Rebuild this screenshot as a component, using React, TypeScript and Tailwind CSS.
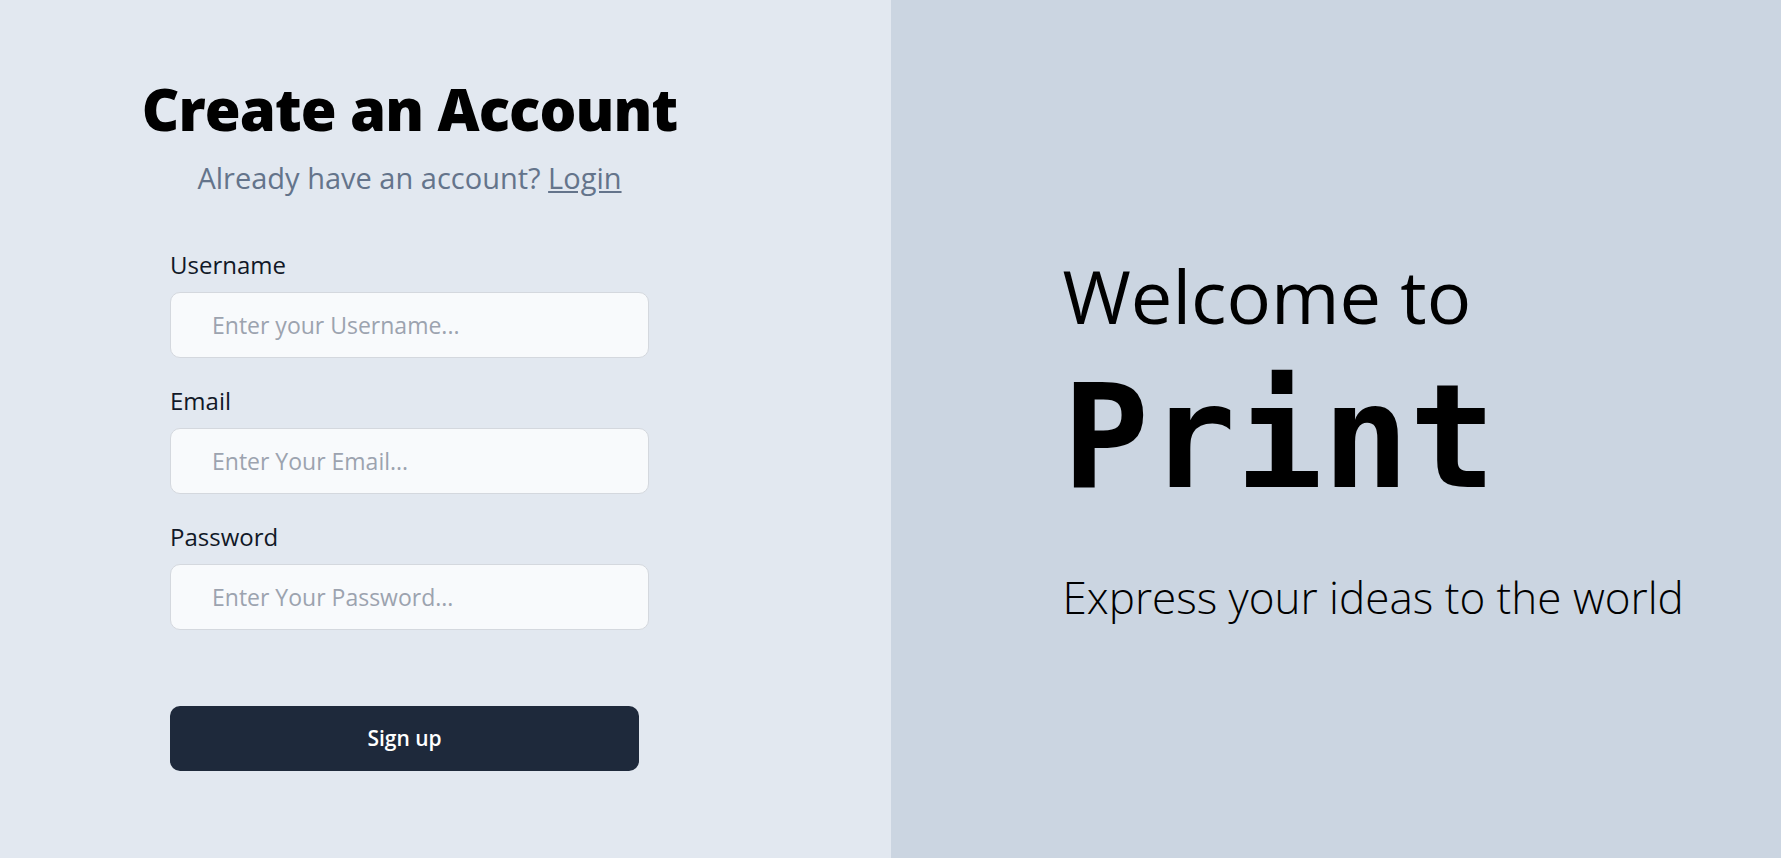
import React from "react";

const Field: React.FC<{ label: string; placeholder: string; type?: string; first?: boolean }> = ({
  label,
  placeholder,
  type = "text",
  first,
}) => {
  return (
    <div className={first ? "flex flex-col" : "flex flex-col mt-[30px]"}>
      <label className="text-[24px] leading-[25px] font-medium text-[#111827]">{label}</label>
      <input
        type={type}
        placeholder={placeholder}
        className="mt-[15px] h-[66px] w-[479px] rounded-[10px] border border-[#d4d8de] bg-[#f8fafc] pl-[41px] text-[23px] text-gray-800 placeholder:text-[#9ca3af] outline-none"
      />
    </div>
  );
};

const App: React.FC = () => {
  return (
    <div className="grid h-[858px] w-full grid-cols-2 font-['Open_Sans','Noto_Sans',sans-serif]">
      {/* left: sign up form */}
      <div className="bg-[#e2e8f0] pl-[170px] pt-[80px]">
        <div className="flex w-[479px] flex-col items-center">
          <h1 className="whitespace-nowrap text-[58px] leading-[58px] font-extrabold tracking-[-0.015em] text-black">
            Create an Account
          </h1>
          <p className="mt-[25px] whitespace-nowrap text-[29px] leading-[30px] font-normal text-[#64748b]">
            Already have an account? <a className="underline">Login</a>
          </p>
        </div>
        <form className="mt-[59px] flex flex-col">
          <Field first label="Username" placeholder="Enter your Username..." />
          <Field label="Email" placeholder="Enter Your Email..." type="email" />
          <Field label="Password" placeholder="Enter Your Password..." type="password" />
          <button
            type="button"
            className="mt-[76px] h-[65px] w-[469px] rounded-[10px] bg-[#1e293b] text-[21px] font-semibold text-white"
          >
            Sign up
          </button>
        </form>
      </div>

      {/* right: welcome */}
      <div className="bg-[#cbd5e1] pl-[172px] pt-[258px]">
        <h2 className="text-[74px] leading-[75px] font-normal text-black">Welcome to</h2>
        <div className="mt-[32px] font-['DejaVu_Sans_Mono','Liberation_Mono',monospace] text-[144px] leading-[144px] font-bold text-black">
          Print
        </div>
        <p className="mt-[66px] text-[44px] leading-[45px] font-light text-black">
          Express your ideas to the world
        </p>
      </div>
    </div>
  );
};

export default App;
